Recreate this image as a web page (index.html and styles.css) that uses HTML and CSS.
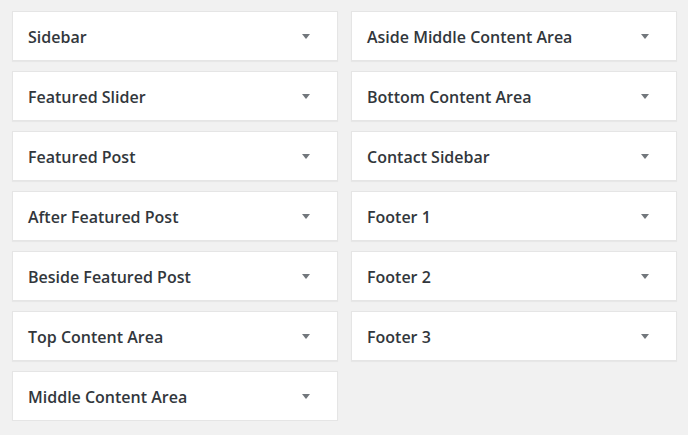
FILE: index.html
```html
<!DOCTYPE html>
<html lang="en">
<head>
  <meta charset="UTF-8">
  <meta name="viewport" content="width=device-width, initial-scale=1.0">
  <title>Widget Areas</title>
  <link rel="stylesheet" href="styles.css">
</head>
<body>

<div class="widget-areas">
  <div class="area-column">
    <div class="area-box"><h3>Sidebar</h3><span class="toggle"></span></div>
    <div class="area-box"><h3>Featured Slider</h3><span class="toggle"></span></div>
    <div class="area-box"><h3>Featured Post</h3><span class="toggle"></span></div>
    <div class="area-box"><h3>After Featured Post</h3><span class="toggle"></span></div>
    <div class="area-box"><h3>Beside Featured Post</h3><span class="toggle"></span></div>
    <div class="area-box"><h3>Top Content Area</h3><span class="toggle"></span></div>
    <div class="area-box"><h3>Middle Content Area</h3><span class="toggle"></span></div>
  </div>
  <div class="area-column">
    <div class="area-box"><h3>Aside Middle Content Area</h3><span class="toggle"></span></div>
    <div class="area-box"><h3>Bottom Content Area</h3><span class="toggle"></span></div>
    <div class="area-box"><h3>Contact Sidebar</h3><span class="toggle"></span></div>
    <div class="area-box"><h3>Footer 1</h3><span class="toggle"></span></div>
    <div class="area-box"><h3>Footer 2</h3><span class="toggle"></span></div>
    <div class="area-box"><h3>Footer 3</h3><span class="toggle"></span></div>
  </div>
</div>

</body>
</html>
```

FILE: styles.css
```css
body {
  margin: 0;
  padding: 11px 11px 0 12px;
  font-family: "Open Sans", "Noto Sans", sans-serif;
  background-color: #f1f1f1;
}

.widget-areas {
  display: flex;
  gap: 13px;
}

.area-column {
  display: flex;
  flex-direction: column;
  gap: 10px;
  width: 326px;
}

.area-box {
  display: flex;
  align-items: center;
  justify-content: space-between;
  height: 50px;
  box-sizing: border-box;
  padding: 1px 27px 0 15px;
  background-color: white;
  border: 1px solid #e5e5e5;
  box-shadow: 0 1px 1px rgba(0, 0, 0, 0.04);
}

.area-box h3 {
  margin: 0;
  font-size: 16px;
  font-weight: 600;
  color: #32373c;
}

.toggle {
  width: 0;
  height: 0;
  border-left: 4px solid transparent;
  border-right: 4px solid transparent;
  border-top: 5px solid #72777c;
}
```
